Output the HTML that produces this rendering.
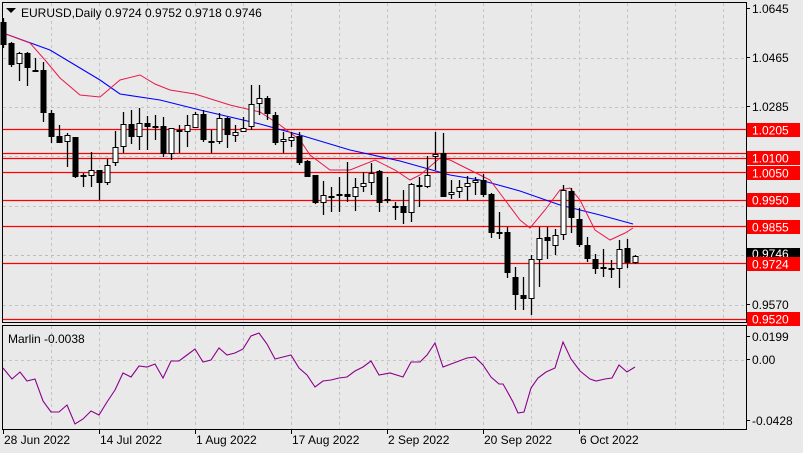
<!DOCTYPE html>
<html><head><meta charset="utf-8"><style>
html,body{margin:0;padding:0;background:#e9e9e9;width:803px;height:453px;overflow:hidden}
svg{display:block;font-family:"Liberation Sans",Arial,sans-serif;font-size:12px}
</style></head><body>
<svg id="s" width="803" height="453" xmlns="http://www.w3.org/2000/svg">
<rect width="803" height="453" fill="#e9e9e9"/>
<g id="grid" stroke="#c4c4c4" stroke-dasharray="3,3" stroke-width="1"></g>
<g id="hl" stroke="#ff0000" stroke-width="1.2"></g>
<line x1="3" y1="255.5" x2="746" y2="255.5" stroke="#bcbcbc" stroke-dasharray="3,3"/>
<polyline fill="none" stroke="#0000ff" stroke-width="1.1" points="3,33 50,50 100,80 120,94 160,100 200,110 260,124 300,135 350,150 400,161 450,175 480,180 520,191 560,205 600,215 633,224"/>
<polyline fill="none" stroke="#e8194a" stroke-width="1" points="3,33 30,43 45,60 60,78 80,95 100,97 120,80 140,75 155,84 170,90 195,94 230,105 260,112 280,125 300,140 310,155 330,170 350,170 375,160 395,170 410,180 420,175 440,158 450,160 470,170 480,175 490,180 505,200 520,220 530,228 545,210 560,190 570,188 580,200 595,230 610,240 625,233 633,228"/>
<g id="candles"></g>
<rect x="2.5" y="2.5" width="744" height="320" fill="none" stroke="#000"/>
<rect x="2.5" y="325.5" width="744" height="104" fill="none" stroke="#000"/>
<line x1="3" y1="360.5" x2="746" y2="360.5" stroke="#c4c4c4" stroke-dasharray="3,3"/>
<polyline fill="none" stroke="#8b008b" stroke-width="1.1" points="3,368 12,379 20,372 27,381 35,379 43,401 51,412 59,412 67,405 75,424 83,419 91,411 99,415 107,402 115,390 123,373 131,377 139,366 147,367 155,364 163,378 171,361 179,361 187,355 195,349 203,362 211,360 219,348 227,355 235,353 243,349 251,336 259,333 267,344 275,359 283,357 291,355 299,368 307,375 315,387 323,381 331,380 339,378 347,377 355,371 363,367 371,361 379,375 390,373 403,377 411,362 420,362 427,355 435,343 443,367 451,364 459,361 467,358 475,357 483,365 491,377 499,384 503,384 507,391 513,402 518,413 524,412 531,388 538,378 546,372 555,368 563,342 571,359 580,371 590,379 596,381 605,379 612,378 619,365 627,372 635,367"/>
<text x="8" y="343" fill="#000">Marlin -0.0038</text>
<path d="M6 8 L16 8 L11 13 Z" fill="#000"/>
<text x="21" y="17" fill="#000">EURUSD,Daily  0.9724 0.9752 0.9718 0.9746</text>
<g id="axis" fill="#000"></g>
<g id="dates" fill="#000"></g>
</svg>
<script>
var NS="http://www.w3.org/2000/svg";
function el(p,t,a,txt){var e=document.createElementNS(NS,t);for(var k in a)e.setAttribute(k,a[k]);if(txt!=null)e.textContent=txt;document.getElementById(p).appendChild(e);return e;}
// grid
[51,99,147,195,243,291,339,387,435,483,531,579,627,675,723].forEach(function(x){el("grid","line",{x1:x+.5,y1:3,x2:x+.5,y2:322});el("grid","line",{x1:x+.5,y1:326,x2:x+.5,y2:429});});
[58,107,156,206,305].forEach(function(y){el("grid","line",{x1:3,y1:y+.5,x2:746,y2:y+.5});});
[129,153,158,172,200,226,263,319].forEach(function(y){el("hl","line",{x1:3,y1:y+.5,x2:746,y2:y+.5});});
var C=[[22,45,18,48,1],[43,65,42,67,1],[53,64,52,81,0],[53,68,52,86,1],[70,70,58,72,1],[70,113,62,122,1],[113,137,110,143,1],[136,143,125,143,1],[135,142,133,167,0],[137,177,137,178,1],[175,175,173,187,1],[170,176,152,187,0],[170,183,170,200,1],[165,183,159,185,0],[147,163,131,166,0],[124,147,112,153,0],[124,137,110,144,1],[123,137,108,150,0],[123,127,116,150,1],[126,128,115,140,0],[126,154,117,157,1],[128,154,128,160,0],[130,132,125,153,1],[125,132,115,147,0],[114,128,112,128,0],[114,140,110,142,1],[141,141,130,153,1],[118,142,113,144,0],[118,135,117,148,1],[132,136,125,142,0],[128,132,117,132,0],[104,127,85,130,0],[98,104,85,115,0],[98,114,96,120,1],[115,143,112,145,1],[139,142,132,153,0],[137,141,132,147,0],[136,163,132,165,1],[161,177,160,177,1],[175,203,175,204,1],[195,203,181,215,0],[196,196,187,212,1],[194,194,177,212,1],[194,197,162,202,1],[187,197,178,211,0],[183,187,172,192,0],[173,183,163,195,0],[171,203,170,212,1],[199,201,177,203,1],[206,208,202,220,0],[206,213,190,224,1],[184,213,183,222,0],[185,187,177,207,1],[175,187,156,188,0],[154,157,132,170,0],[153,197,133,197,1],[192,195,180,199,0],[187,192,180,198,0],[183,187,176,201,0],[180,183,177,195,0],[180,195,174,197,1],[194,233,193,238,1],[232,232,212,239,1],[232,273,227,278,1],[277,295,267,310,1],[295,299,277,310,1],[259,299,255,315,0],[238,260,227,287,0],[237,241,227,259,1],[235,246,229,255,0],[190,235,185,240,0],[191,218,188,233,1],[219,245,208,247,1],[245,259,237,262,1],[259,269,254,274,1],[267,269,249,277,0],[268,268,260,278,1],[249,269,240,288,0],[248,263,239,268,1],[256,263,255,264,0]];
C.forEach(function(c,i){var x=3.5+8*i;
el("candles","line",{x1:x,y1:c[2],x2:x,y2:c[3],stroke:"#000","stroke-width":1.3});
var h=Math.max(c[1]-c[0],1);
if(c[4]==1){el("candles","rect",{x:x-3,y:c[0],width:6,height:h+(c[1]==c[0]?1:0),fill:"#000"});}
else{el("candles","rect",{x:x-2.5,y:c[0]+.5,width:5,height:Math.max(h-1,1),fill:"#fff",stroke:"#000","stroke-width":1});}
});
// axis labels
[[1.0645,13],[1.0465,62],[1.0285,111],[0.957,309],["0.0199",341],["0.00",364],["-0.0428",425]].forEach(function(a){var t=typeof a[0]=="number"?a[0].toFixed(4):a[0];el("axis","text",{x:752,y:a[1]},t);el("axis","line",{x1:747,y1:a[1]-4.5,x2:750,y2:a[1]-4.5,stroke:"#000"});});
el("axis","text",{x:752,y:160},"1.0130");el("axis","text",{x:752,y:206},"0.9930");
[["1.0205",123],["1.0100",151],["1.0050",166],["0.9950",193],["0.9855",220],["0.9724",257],["0.9520",312]].forEach(function(a){el("axis","rect",{x:747,y:a[1],width:53,height:14,fill:"#ff0000"});el("axis","text",{x:752,y:a[1]+11.5,fill:"#fff"},a[0]);});
el("axis","rect",{x:747,y:248,width:53,height:9,fill:"#000"});
el("axis","text",{x:752,y:258,fill:"#fff"},"0.9746");
el("axis","rect",{x:747,y:257,width:53,height:14,fill:"#ff0000"});el("axis","text",{x:752,y:268.5,fill:"#fff"},"0.9724");
[["28 Jun 2022",3],["14 Jul 2022",99],["1 Aug 2022",195],["17 Aug 2022",291],["2 Sep 2022",387],["20 Sep 2022",483],["6 Oct 2022",579]].forEach(function(d){el("dates","text",{x:d[1]+1,y:444},d[0]);el("dates","line",{x1:d[1]+.5,y1:430,x2:d[1]+.5,y2:434,stroke:"#000"});});
</script>
</body></html>
